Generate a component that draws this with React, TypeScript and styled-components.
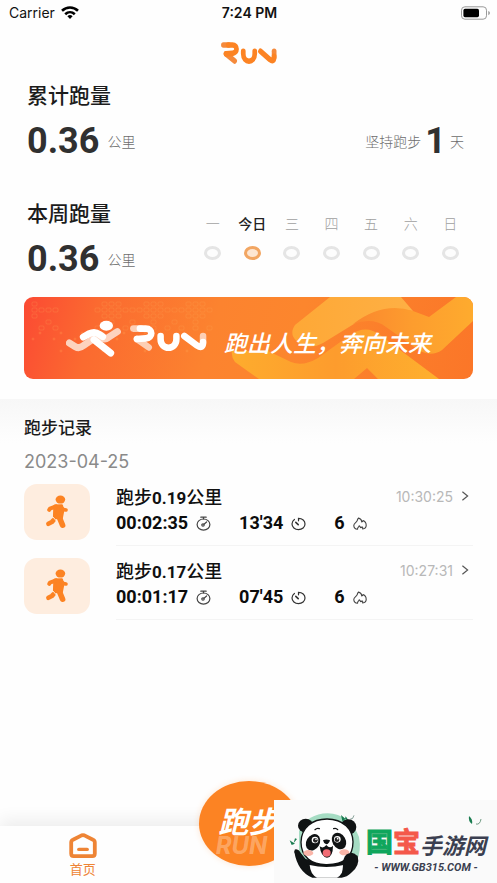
import React from "react";
import styled, { createGlobalStyle } from "styled-components";

const ORANGE = "#fc8323";
const CJK = '"Noto Sans CJK SC", sans-serif';

const GlobalStyle = createGlobalStyle`
  *, *::before, *::after { box-sizing: border-box; }
  body { margin: 0; background: #fefefe; color: #1c1c1c; font-family: Inter, ${CJK}; }
  h1, h2, h3, p, ol, ul { margin: 0; padding: 0; font: inherit; }
  ol, ul { list-style: none; }
  button { border: 0; padding: 0; background: none; font: inherit; color: inherit; cursor: pointer; }
  a { color: inherit; text-decoration: none; }
  svg { display: block; flex: none; }
`;

const Screen = styled.div`
  display: flex;
  flex-direction: column;
  min-height: 100vh;
`;

const StatusBar = styled.header`
  display: grid;
  grid-template-columns: 1fr auto 1fr;
  align-items: center;
  height: 25px;
  padding: 0 7px 0 9px;
  font-size: 14px;
  color: #111;
`;

const Carrier = styled.span`
  display: flex;
  align-items: center;
  gap: 6px;
`;

const Clock = styled.time`
  font-weight: 600;
`;

const BatterySlot = styled.span`
  justify-self: end;
`;

const Brand = styled.h1`
  display: flex;
  justify-content: center;
  padding: 17px 0 18px;
`;

const Summary = styled.section`
  display: flex;
  justify-content: space-between;
  align-items: flex-end;
  padding: 0 33px 0 27px;
  margin-bottom: 36px;
`;

const Heading = styled.h2`
  font: 500 21px/24px ${CJK};
  margin-bottom: 12px;
`;

const Amount = styled.p<{ $gap: number }>`
  display: flex;
  align-items: center;
  gap: ${(p) => p.$gap}px;
  font: 300 14px/46px ${CJK};
  color: #6c6c6c;
`;

const BigNumber = styled.strong`
  font: 700 36px/46px Roboto, sans-serif;
  color: #303030;
`;

const Week = styled.ol`
  display: grid;
  grid-template-columns: repeat(7, 1fr);
  flex: 0 0 277px;
  margin: 0 -6px 22px 0;
`;

const Day = styled.li<{ $today?: boolean }>`
  display: flex;
  flex-direction: column;
  align-items: center;
  gap: 13px;
  white-space: nowrap;
  font: ${(p) => (p.$today ? "500 14px" : "300 14px")}/20px ${CJK};
  color: ${(p) => (p.$today ? "#222" : "#a0a0a0")};

  &::after {
    content: "";
    width: 17px;
    height: 14px;
    border: 3px solid ${(p) => (p.$today ? "#f2a663" : "#e5e5e5")};
    border-radius: 50%;
    background: ${(p) => (p.$today ? "#fde6d2" : "#fdfdfd")};
  }
`;

const Banner = styled.a`
  position: relative;
  display: flex;
  align-items: center;
  height: 82px;
  margin: -21px 24px 20px;
  padding-left: 42px;
  border-radius: 9px;
  overflow: hidden;
  color: #fff;
  background: linear-gradient(105deg, #fb4a33 0%, #fb6a30 16%, #fc832f 42%, #fc862d 60%, #fb7628 100%);
`;

const BannerArt = styled.svg`
  position: absolute;
  top: 0;
  right: 0;
  height: 100%;
`;

const BannerDots = styled.svg`
  position: absolute;
  top: 0;
  left: 0;
  height: 100%;
`;

const BannerContent = styled.span`
  position: relative;
  display: flex;
  align-items: center;
  gap: 9px;
`;

const Slogan = styled.span`
  margin-left: 8px;
  padding-top: 7px;
  font: italic 500 23px/30px ${CJK};
  white-space: nowrap;
`;

const Records = styled.section`
  flex: 1;
  padding: 16px 24px 80px;
  background: linear-gradient(#f7f7f7, #fefefe 44px);
`;

const RecordsTitle = styled.h2`
  font: 500 17px/24px ${CJK};
`;

const DateLabel = styled.h3`
  margin: 12px 0 11px;
  font-size: 18px;
  line-height: 22px;
  color: #8a8a8a;
`;

const RecordRow = styled.a`
  display: flex;
  gap: 26px;
  height: 74px;
`;

const RunnerTile = styled.span`
  display: grid;
  place-items: center;
  flex: none;
  width: 66px;
  height: 56px;
  border-radius: 13px;
  background: #feeddf;
`;

const RecordBody = styled.span`
  flex: 1;
  display: flex;
  justify-content: space-between;
  height: 62px;
  border-bottom: 1px solid #f4f4f4;
`;

const RecordTitle = styled.span`
  display: block;
  font: 500 18px/24px ${CJK};
  color: #111;
`;

const Distance = styled.b`
  font: 700 17px/24px Roboto, sans-serif;
`;

const Metrics = styled.span`
  display: flex;
  gap: 28px;
`;

const Metric = styled.span`
  display: flex;
  align-items: center;
  gap: 8px;
  font: 700 18px/26px Roboto, sans-serif;
  color: #0c0c0c;
`;

const StartTime = styled.span`
  display: flex;
  align-items: center;
  gap: 8px;
  height: 24px;
  padding-right: 4px;
  font-size: 14px;
  color: #b8b8b8;
`;

const TabBar = styled.nav`
  position: sticky;
  bottom: 0;
  display: grid;
  grid-template-columns: repeat(3, 1fr);
  justify-items: center;
  height: 57px;
  background: #fefefe;
  box-shadow: 0 -6px 16px rgba(0, 0, 0, 0.07);
`;

const Tab = styled.button`
  display: flex;
  flex-direction: column;
  align-items: center;
  gap: 1px;
  padding-top: 7px;
  font: 400 13px/18px ${CJK};
  color: #ee8435;
`;

const RunButton = styled.button`
  position: absolute;
  bottom: 17px;
  left: 50%;
  display: flex;
  flex-direction: column;
  align-items: center;
  width: 100px;
  height: 85px;
  margin-left: -50px;
  padding-top: 23px;
  border-radius: 50%;
  background: ${ORANGE};
  color: #fff;
  box-shadow: 0 0 6px rgba(252, 131, 35, 0.2);
`;

const RunLabel = styled.span`
  font: italic 700 30px/32px ${CJK};
`;

const RunGhost = styled.span`
  padding-right: 14px;
  font: italic 700 24px/20px Inter, sans-serif;
  color: rgba(255, 255, 255, 0.3);
`;

const Watermark = styled.aside`
  position: fixed;
  right: 0;
  bottom: 0;
  display: flex;
  align-items: flex-end;
  height: 83px;
  padding: 0 11px 0 15px;
  background: #fafafa;
`;

const SiteName = styled.div`
  position: relative;
  display: flex;
  flex-direction: column;
  align-items: center;
  gap: 4px;
  padding-bottom: 9px;
`;

const SiteTitle = styled.p`
  display: flex;
  align-items: flex-end;
  font: 700 22px/26px ${CJK};
  color: #3b3f50;
`;

const TitleGlyph = styled.span<{ $color: string }>`
  font-size: 27px;
  line-height: 32px;
  color: ${(p) => p.$color};
  -webkit-text-stroke: 1px ${(p) => p.$color};
`;

const TitleRest = styled.span`
  font-style: italic;
`;

const SiteUrl = styled.p`
  font: italic 700 11px/13px Roboto, sans-serif;
  color: #3b3f50;
  white-space: nowrap;
`;

const Leaves = styled.svg`
  position: absolute;
  top: -10px;
  right: 4px;
`;

function WifiIcon() {
  return (
    <svg width="18" height="13" viewBox="0 0 18 13" fill="none" stroke="#000" strokeWidth="2.6">
      <path d="M1 4.8C5.6.4 12.4.4 17 4.8" />
      <path d="M4.2 8.2C7 5.6 11 5.6 13.8 8.2" />
      <path d="M6.4 10.2Q9 8 11.6 10.2L9 13Z" fill="#000" stroke="none" />
    </svg>
  );
}

function BatteryIcon() {
  return (
    <svg width="29" height="14" viewBox="0 0 29 14">
      <rect x=".5" y=".8" width="25" height="12.4" rx="3.4" fill="none" stroke="#999" />
      <rect x="2.4" y="2.8" width="15.6" height="8.4" rx="1.6" fill="#000" />
      <path d="M27.4 5V9.2Q28.8 8.6 28.8 7.1T27.4 5Z" fill="#888" />
    </svg>
  );
}

function RunLogo({ width, height, color, tint }: { width: number; height: number; color: string; tint: string }) {
  return (
    <svg
      width={width}
      height={height}
      viewBox="0 0 78 26"
      preserveAspectRatio="none"
      role="img"
      aria-label="RUN"
      fill="none"
      stroke={color}
      strokeWidth="6.6"
      strokeLinecap="round"
      strokeLinejoin="round"
    >
      <path d="M7 14 19 22.4" stroke={tint} />
      <path d="M3.4 3.6H11" stroke={tint} />
      <path d="M10 3.6H16C23.5 3.6 23.5 13 16 13.4L7 14" />
      <path d="M31 11V14C31 25.6 47 25.6 47 14V11" />
      <path d="M74 11V18" stroke={tint} />
      <path d="M55 11 68 20.6Q74 24.6 74 17" />
    </svg>
  );
}

function BannerRunner() {
  return (
    <svg width="55" height="38" viewBox="152 80 165 114" fill="none" strokeWidth="21" strokeLinecap="round" strokeLinejoin="round">
      <path d="M162 152 180 163Q192 170 204 160L236 138" stroke="#fdd3bf" />
      <path d="M248 128 262 138Q270 142 278 136L306 118" stroke="#fdd3bf" />
      <path d="M204 134 222 124Q238 116 252 126L262 133" stroke="#fff" />
      <path d="M236 142 286 182" stroke="#fff" />
      <ellipse cx="273" cy="100" rx="20" ry="15" fill="#fff" />
    </svg>
  );
}

function BannerRibbons() {
  return (
    <BannerArt viewBox="0 0 260 82" aria-hidden="true">
      <defs>
        <linearGradient id="ribbonUp" x1="0" y1="0" x2="1" y2="0">
          <stop offset="0" stopColor="#fb872e" />
          <stop offset=".5" stopColor="#fd9d2e" />
          <stop offset="1" stopColor="#feab2e" />
        </linearGradient>
        <linearGradient id="ribbonLeft" x1="0" y1="0" x2="1" y2="0">
          <stop offset="0" stopColor="#fea836" />
          <stop offset="1" stopColor="#feb044" />
        </linearGradient>
        <linearGradient id="ribbonLow" x1="0" y1="0" x2="1" y2="0">
          <stop offset="0" stopColor="#feac2d" />
          <stop offset=".5" stopColor="#fd9c2d" />
          <stop offset="1" stopColor="#feb02e" />
        </linearGradient>
      </defs>
      <path d="M19 54H55L78 65Q90 70 105 61L137 38Q153 27 167 38L226 82H165L154 71 141 82H46L22 65Q18 60 19 54Z" fill="url(#ribbonLow)" />
      <path d="M82 28 117 0H188L200 14Q168 8 149 22L110 46Q97 53 86 46 75 38 82 28Z" fill="url(#ribbonLeft)" />
      <path d="M140 27Q170 4 200 14L216 20 243 0H260V24L229 53Q219 60 207 54L173 30Q160 20 140 27Z" fill="url(#ribbonUp)" />
    </BannerArt>
  );
}

function BannerPattern() {
  const cells: React.ReactNode[] = [];
  for (let row = 0; row < 11; row++) {
    for (let col = 0; col < 26; col++) {
      const v = (row * 7 + col * 5 + row * col) % 6;
      if (row < 5 ? v < 3 && (col < 4 || col > 8) : v < 1 || (row < 8 && col < 18 && v === 3)) {
        cells.push(
          <rect
            key={`${row}-${col}`}
            x={8 + col * 7}
            y={5 + row * 6}
            width={row < 5 ? 5 : 2}
            height={row < 5 ? 4 : 2}
            rx="1"
            fill="none"
            stroke="#ffae5c"
            strokeWidth=".8"
            opacity={row < 5 ? 0.28 : 0.32}
          />
        );
      }
    }
  }
  return (
    <BannerDots viewBox="0 0 200 82" aria-hidden="true">
      {cells}
    </BannerDots>
  );
}

function RecordRunner() {
  return (
    <svg width="24" height="34" viewBox="0 0 24 34" fill="none" stroke={ORANGE} strokeLinecap="round" strokeLinejoin="round">
      <ellipse cx="15.4" cy="4.6" rx="4.8" ry="4" fill={ORANGE} stroke="none" />
      <path d="M9.8 11 16.6 10.8 17.6 16.6 16.4 23 9.4 22.6Z" fill={ORANGE} strokeWidth="3" />
      <path d="M11 11.4 5 13.6 4.2 14.8" strokeWidth="4" />
      <path d="M16.4 12.4 18.6 14.6 21 15" strokeWidth="3.6" />
      <path d="M14.2 22 17.6 30.2" strokeWidth="5.6" />
      <path d="M8.6 25.2 6.8 27 3.4 28.8" strokeWidth="4.6" />
      <path d="M7.6 21.6 11.6 26.2" stroke="#feeddf" strokeWidth="1" />
    </svg>
  );
}

function StopwatchIcon() {
  return (
    <svg width="15" height="15" viewBox="0 0 15 15" fill="none" stroke="#444" strokeWidth="1.2" strokeLinecap="round">
      <path d="M4.8 1.2H10.2M7.5 1.2V2.8" />
      <ellipse cx="7.5" cy="8.6" rx="6.4" ry="5.6" />
      <circle cx="7" cy="9" r="1.2" />
      <path d="M8 8.2 10.6 6" />
    </svg>
  );
}

function PaceIcon() {
  return (
    <svg width="15" height="15" viewBox="0 0 15 15" fill="none" stroke="#333" strokeWidth="1.2" strokeLinecap="round">
      <path d="M7.5 4.8V2.4C11.4 2.4 14 4.9 14 8S11.2 13.6 7.5 13.6 1 11 1 8C1 6.2 1.8 4.6 3.4 3.4" />
      <path d="M4.8 6.4 7.2 8.6" strokeWidth="1.6" />
    </svg>
  );
}

function FlameIcon() {
  return (
    <svg width="14" height="15" viewBox="0 0 14 15" fill="none" stroke="#444" strokeWidth="1.1" strokeLinecap="round" strokeLinejoin="round">
      <path d="M4.6 13.2C2 13 .8 11.4.8 9.4.8 7.2 3.6 6.4 4.2 4.6 4.4 3.6 4.6 2.8 5.6 2 7.6 2.8 8.8 4.2 8.8 6 9.6 5.8 10 5.2 10 4.6 12 5.4 13.2 7.2 13.2 9.4 13.2 11.4 11.8 12.6 9.6 13 10 12 9.8 11.2 9 10.8 8.6 11.6 8 11.8 7.4 11.6 7.4 10.8 7 10.2 6.2 9.8 6 11.2 4.2 11.6 4.6 13.2Z" />
    </svg>
  );
}

function Chevron() {
  return (
    <svg width="8" height="10" viewBox="0 0 8 10" fill="none" stroke="#555" strokeWidth="1.2">
      <path d="M1.4.8 6.6 5 1.4 9.2" />
    </svg>
  );
}

function HomeIcon() {
  return (
    <svg width="28" height="26" viewBox="0 0 28 26" fill="none" stroke="#ee8435" strokeWidth="3.8" strokeLinejoin="round" strokeLinecap="round">
      <path d="M2.2 9.4Q2.2 7.6 4 6.8L12.6 2.4Q14 1.9 15.4 2.4L24 6.8Q25.8 7.6 25.8 9.4V20.6Q25.8 23.2 23.4 23.2H4.6Q2.2 23.2 2.2 20.6Z" />
      <path d="M9.8 16.4H18.2" strokeWidth="3.4" />
    </svg>
  );
}

function Panda() {
  return (
    <svg width="77" height="72" viewBox="62 62 231 216" role="img" aria-label="熊猫">
      <path d="M92 122Q118 70 178 69 244 72 272 140 280 180 264 216H92Z" fill="#a5dcc3" />
      <path d="M64 150 80 160 70 164ZM86 146 76 158 80 144ZM218 74 236 90 222 92ZM232 78 228 92 242 92Z" fill="#197c50" />
      <path d="M246 86Q254 88 257 75" fill="none" stroke="#507769" strokeWidth="2" />
      <path d="M78 184Q78 172 90 180L112 206Q174 226 228 206L246 190 268 196Q276 226 248 248 236 260 220 262H132Q88 244 78 184Z" fill="#101314" />
      <path d="M124 224Q174 236 226 224 224 254 206 262H146Q126 252 124 224Z" fill="#fff" />
      <ellipse cx="112" cy="106" rx="23" ry="21" fill="#101314" />
      <ellipse cx="240" cy="110" rx="24" ry="23" fill="#101314" />
      <path d="M176 86C226 86 253 118 254 154 254 204 220 222 176 223 130 224 98 200 98 156 98 112 132 86 176 86Z" fill="#fff" stroke="#101314" strokeWidth="4" />
      <ellipse cx="134" cy="156" rx="20" ry="26" transform="rotate(30 134 156)" fill="#101314" />
      <ellipse cx="212" cy="152" rx="20" ry="26" transform="rotate(-30 212 152)" fill="#101314" />
      <circle cx="140" cy="149" r="10" fill="#fff" />
      <circle cx="207" cy="147" r="10" fill="#fff" />
      <circle cx="141" cy="150" r="7" fill="#222" />
      <circle cx="206" cy="148" r="7" fill="#222" />
      <circle cx="143" cy="147" r="2.5" fill="#fff" />
      <circle cx="208" cy="145" r="2.5" fill="#fff" />
      <path d="M140 118Q146 112 153 115M196 115Q203 112 208 118" fill="none" stroke="#101314" strokeWidth="4" strokeLinecap="round" />
      <ellipse cx="120" cy="188" rx="15" ry="9" fill="#fab5a8" />
      <ellipse cx="228" cy="186" rx="15" ry="9" fill="#fab5a8" />
      <path d="M164 150Q174 145 185 150 182 161 174 162 166 160 164 150Z" fill="#101314" />
      <path d="M154 168Q165 176 174 164 184 176 194 166 194 200 176 202 158 200 154 168Z" fill="#101314" />
      <ellipse cx="175" cy="188" rx="12" ry="11" fill="#f16c74" />
      <path d="M78 184Q88 170 98 190L114 212 118 246Q92 230 78 184Z" fill="#101314" />
      <path d="M226 206Q232 186 252 188 268 190 268 212L246 238 222 246Z" fill="#101314" />
    </svg>
  );
}

const days = ["一", "今日", "三", "四", "五", "六", "日"];

const records = [
  { km: "0.19", duration: "00:02:35", pace: "13'34", kcal: "6", at: "10:30:25" },
  { km: "0.17", duration: "00:01:17", pace: "07'45", kcal: "6", at: "10:27:31" },
];

export default function App() {
  return (
    <Screen>
      <GlobalStyle />
      <StatusBar>
        <Carrier>
          Carrier
          <WifiIcon />
        </Carrier>
        <Clock>7:24 PM</Clock>
        <BatterySlot>
          <BatteryIcon />
        </BatterySlot>
      </StatusBar>

      <Brand>
        <RunLogo width={56} height={22} color={ORANGE} tint="#f58a3c" />
      </Brand>

      <Summary>
        <div>
          <Heading>累计跑量</Heading>
          <Amount $gap={8}>
            <BigNumber>0.36</BigNumber>公里
          </Amount>
        </div>
        <Amount $gap={4}>
          坚持跑步<BigNumber>1</BigNumber>天
        </Amount>
      </Summary>

      <Summary>
        <div>
          <Heading>本周跑量</Heading>
          <Amount $gap={8}>
            <BigNumber>0.36</BigNumber>公里
          </Amount>
        </div>
        <Week>
          {days.map((d) => (
            <Day key={d} $today={d === "今日"}>
              {d}
            </Day>
          ))}
        </Week>
      </Summary>

      <Banner href="#run">
        <BannerPattern />
        <BannerRibbons />
        <BannerContent>
          <BannerRunner />
          <RunLogo width={77} height={26} color="#fff" tint="#fdcfb5" />
          <Slogan>跑出人生，奔向未来</Slogan>
        </BannerContent>
      </Banner>

      <Records>
        <RecordsTitle>跑步记录</RecordsTitle>
        <DateLabel>2023-04-25</DateLabel>
        <ul>
          {records.map((r) => (
            <li key={r.at}>
              <RecordRow href="#record">
                <RunnerTile>
                  <RecordRunner />
                </RunnerTile>
                <RecordBody>
                  <span>
                    <RecordTitle>
                      跑步<Distance>{r.km}</Distance>公里
                    </RecordTitle>
                    <Metrics>
                      <Metric>
                        {r.duration}
                        <StopwatchIcon />
                      </Metric>
                      <Metric>
                        {r.pace}
                        <PaceIcon />
                      </Metric>
                      <Metric>
                        {r.kcal}
                        <FlameIcon />
                      </Metric>
                    </Metrics>
                  </span>
                  <StartTime>
                    {r.at}
                    <Chevron />
                  </StartTime>
                </RecordBody>
              </RecordRow>
            </li>
          ))}
        </ul>
      </Records>

      <TabBar>
        <Tab>
          <HomeIcon />
          首页
        </Tab>
        <RunButton>
          <RunLabel>跑步</RunLabel>
          <RunGhost aria-hidden="true">RUN</RunGhost>
        </RunButton>
      </TabBar>

      <Watermark>
        <Panda />
        <SiteName>
          <Leaves width="14" height="12" viewBox="0 0 14 12" aria-hidden="true">
            <path d="M1 1Q5 4 4 9 0 6 1 1Z" fill="#197c50" />
            <path d="M8 9Q12 10 13 4" fill="none" stroke="#6f9a83" />
          </Leaves>
          <SiteTitle>
            <TitleGlyph $color="#0fa65c">国</TitleGlyph>
            <TitleGlyph $color="#f4584a">宝</TitleGlyph>
            <TitleRest>手游网</TitleRest>
          </SiteTitle>
          <SiteUrl>- WWW.GB315.COM -</SiteUrl>
        </SiteName>
      </Watermark>
    </Screen>
  );
}
